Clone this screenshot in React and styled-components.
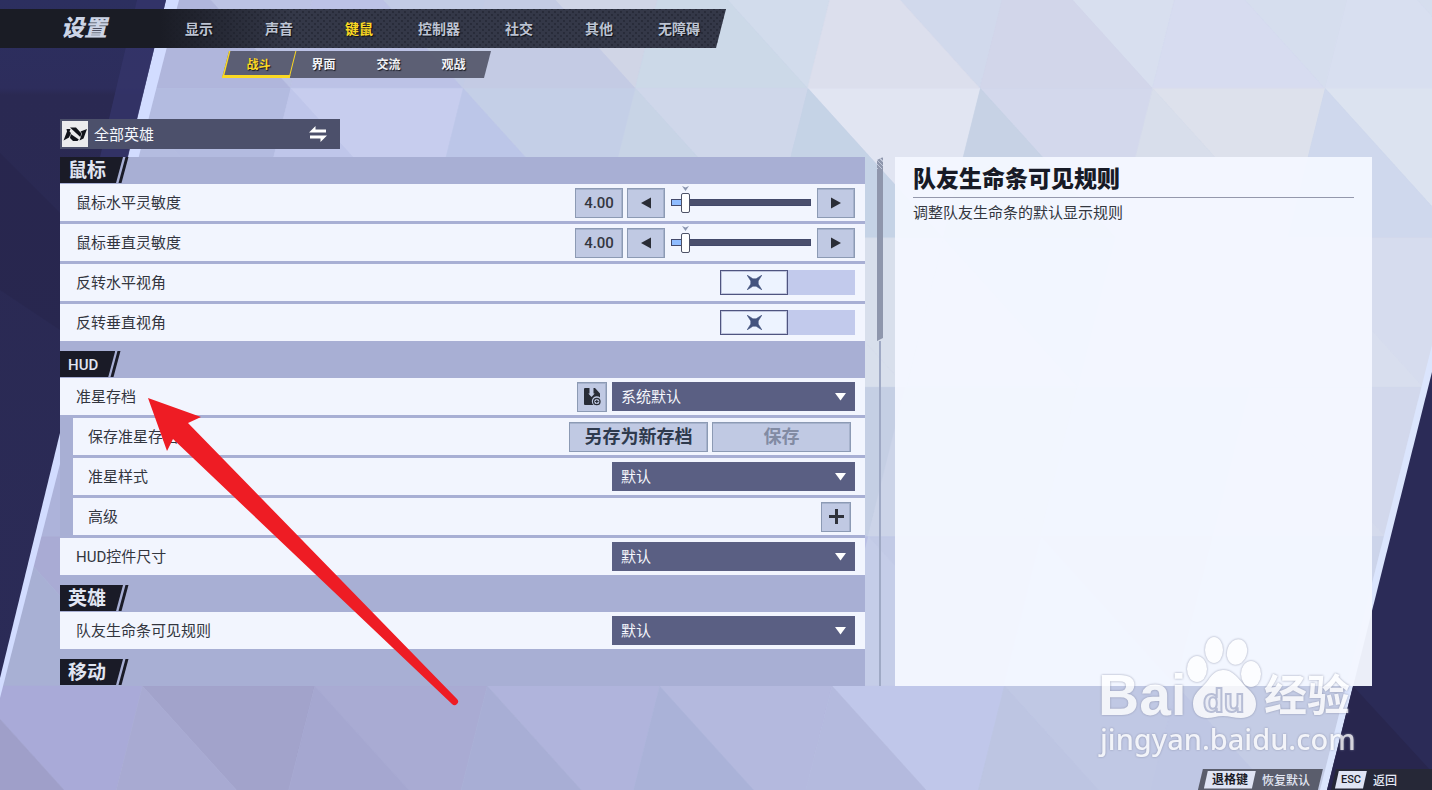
import { useState } from "react";
import styled, { createGlobalStyle } from "styled-components";

const GlobalStyle = createGlobalStyle`
    * {
        box-sizing: border-box;
    }

    body {
        margin: 0;
        background: #c4cbe6;
        font-family: Roboto, "Noto Sans CJK SC", sans-serif;
        font-size: 15px;
        color: #33363f;
    }

    button, input, select {
        font: inherit;
        color: inherit;
        margin: 0;
        padding: 0;
        border: none;
    }

    button, select {
        cursor: pointer;
    }
`;

const Page = styled.div`
    position: relative;
    display: flex;
    flex-direction: column;
    min-height: 100vh;
    overflow: hidden;
`;

const Backdrop = styled.svg`
    position: absolute;
    inset: 0;
    width: 100%;
    height: 100%;
    z-index: -1;
`;

const Header = styled.header`
    display: flex;
    flex-direction: column;
    align-items: flex-start;
    gap: 3px;
    padding-top: 9px;
`;

const NavBar = styled.nav`
    display: flex;
    align-items: center;
    height: 39px;
    padding: 0 7px 0 61px;
    background:
        linear-gradient(90deg, #1a1c25 22%, transparent 40%),
        radial-gradient(circle, rgba(14, 16, 26, 0.3) 1px, transparent 1px) 0 0 / 6px 6px,
        radial-gradient(circle, rgba(14, 16, 26, 0.3) 1px, transparent 1px) 3px 3px / 6px 6px,
        #343848;
    clip-path: polygon(0 0, 100% 0, calc(100% - 10px) 100%, 0 100%);
`;

const PageTitle = styled.h1`
    margin: 0;
    width: 98px;
    font-size: 23px;
    font-weight: 900;
    font-style: italic;
    line-height: 39px;
    color: #ccd4e6;
`;

const NavTab = styled.button`
    width: 80px;
    height: 39px;
    padding-bottom: 2px;
    background: none;
    font-size: 14px;
    font-weight: 700;
    white-space: nowrap;
    color: ${props => props.$active ? "#fbd923" : "#bcc3d2"};
    text-shadow: 1px 1px 1px #0c0e16;
`;

const SubNav = styled.nav`
    display: flex;
    height: 27px;
    margin-left: 222px;
    padding: 0 5px 0 4px;
    background: rgba(84, 87, 106, 0.92);
    clip-path: polygon(7px 0, 100% 0, calc(100% - 7px) 100%, 0 100%);
`;

const SubTab = styled.button`
    position: relative;
    width: 65px;
    padding-bottom: 2px;
    background: none;
    font-size: 12px;
    font-weight: 700;
    color: ${props => props.$active ? "#fbd923" : "#f2f3f7"};
    text-shadow: 1px 1px 1px #14161e;

    &::before {
        content: "";
        display: ${props => props.$active ? "block" : "none"};
        position: absolute;
        inset: 0 -2px 0 -2px;
        border: solid #fbd923;
        border-width: 0 1px 3px 3px;
        transform: skewX(-14deg);
    }
`;

const HeroPicker = styled.button`
    display: flex;
    align-items: center;
    gap: 6px;
    width: 280px;
    height: 30px;
    margin: 41px 60px 8px;
    padding: 0 13px 0 2px;
    background: #4c506b;
    color: #f4f6fc;
    text-align: left;

    span {
        flex: 1;
        padding-bottom: 2px;
    }
`;

const Content = styled.main`
    display: grid;
    grid-template-columns: minmax(0, 805fr) 6px minmax(0, 477fr);
    gap: 12px;
    padding: 0 60px;
`;

const SettingsList = styled.div`
    display: flex;
    flex-direction: column;
    gap: 10px;
    background: #a8afd4;
`;

const SectionHead = styled.div`
    display: flex;
    height: 27px;
`;

const SectionTitle = styled.h2`
    margin: 0;
    height: 26px;
    padding: 0 17px 0 8px;
    background: #1a1b27;
    color: #e1e5f2;
    font-size: ${props => props.$latin ? "15px" : "19px"};
    font-weight: ${props => props.$latin ? "500" : "700"};
    line-height: 28px;
    clip-path: polygon(0 0, 100% 0, calc(100% - 7px) 100%, 0 100%);
`;

const Slash = styled.i`
    width: 3px;
    height: 26px;
    margin-left: -1px;
    background: #1a1b27;
    transform: skewX(-15deg);
`;

const Rows = styled.div`
    display: flex;
    flex-direction: column;
    gap: 3px;
`;

const Row = styled.div`
    display: flex;
    align-items: center;
    justify-content: space-between;
    height: 37px;
    margin-left: ${props => props.$sub ? "13px" : "0"};
    padding: 0 ${props => props.$inset ? "14px" : "10px"} 0 ${props => props.$sub ? "15px" : "16px"};
    background: #f2f5fe;
`;

const RowLabel = styled.span`
    padding-bottom: 2px;
`;

const Controls = styled.div`
    display: flex;
    align-items: center;
    gap: ${props => props.$gap || "4px"};
`;

const BoxButton = styled.button`
    display: flex;
    align-items: center;
    justify-content: center;
    width: ${props => props.$width || "30px"};
    height: 30px;
    border: 1px solid #8c9ab4;
    box-shadow: inset -1px 1px 0 #a6b2cc;
    background: #c0c9e3;
    color: #2f3a4d;
    font-size: 18px;
    font-weight: 700;
    line-height: 26px;

    &:disabled {
        color: #828ba3;
    }
`;

const ValueInput = styled.input`
    width: 48px;
    height: 30px;
    border: 1px solid #8c9ab4;
    box-shadow: inset -1px 1px 0 #a6b2cc;
    background: #c0c9e3;
    color: #33363f;
    font-weight: 500;
    text-align: center;
`;

const SliderBox = styled.div`
    position: relative;
    display: flex;
    align-items: center;
    width: 140px;
    height: 30px;
    margin: 0 2px;
`;

const Range = styled.input`
    appearance: none;
    width: 100%;
    height: 7px;
    border: 1px solid #43496a;
    background: linear-gradient(90deg, #8fbcff var(--fill), #4c506d var(--fill));

    &::-webkit-slider-thumb {
        appearance: none;
        width: 9px;
        height: 20px;
        border: 1px solid #4d5166;
        border-radius: 2px;
        background: #ffffff;
    }
`;

const DefaultMark = styled.svg`
    position: absolute;
    left: 11px;
    top: -2px;
    width: 7px;
    height: 5px;
`;

const ToggleBox = styled.span`
    position: relative;
    display: flex;
    width: 135px;
    height: 25px;
    background: #c2caec;

    input {
        position: absolute;
        inset: 0;
        width: 100%;
        height: 100%;
        opacity: 0;
    }
`;

const Knob = styled.span`
    display: flex;
    align-items: center;
    justify-content: center;
    width: 68px;
    margin-left: ${props => props.$on ? "auto" : "0"};
    border: 1px solid #4f5480;
    box-shadow: inset 0 0 0 1px #c0c6de;
    background: #edf3ff;
`;

const SelectBox = styled.div`
    position: relative;
    width: 243px;

    svg {
        position: absolute;
        right: 9px;
        top: 11px;
        pointer-events: none;
    }
`;

const Select = styled.select`
    appearance: none;
    display: block;
    width: 100%;
    height: 29px;
    padding: 0 30px 0 9px;
    background: #5a5f83;
    color: #f4f6fc;
    border-radius: 0;
`;

const Scrollbar = styled.div`
    display: flex;
    flex-direction: column;
    align-items: center;
`;

const ScrollThumb = styled.div`
    width: 6px;
    height: 184px;
    background:
        repeating-linear-gradient(45deg, rgba(226, 231, 244, 0.6) 0 1px, transparent 1px 3px) 0 0 / 6px 12px no-repeat,
        #8e96ac;
    clip-path: polygon(0 3px, 100% 0, 100% calc(100% - 3px), 0 100%);
`;

const ScrollTrack = styled.div`
    flex: 1;
    width: 2px;
    background: #9fa9c4;
`;

const DetailPanel = styled.aside`
    padding: 5px 18px 0;
    background: rgba(244, 247, 255, 0.96);

    h3 {
        margin: 0;
        font-size: 23px;
        font-weight: 900;
        line-height: 35px;
        color: #171a26;
        border-bottom: 1px solid #9498ac;
    }

    p {
        margin: 4px 0;
        line-height: 22px;
    }
`;

const Footer = styled.footer`
    display: flex;
    justify-content: flex-end;
    gap: 8px;
    margin-top: auto;
`;

const FooterButton = styled.button`
    display: flex;
    align-items: center;
    gap: 6px;
    height: 21px;
    padding: ${props => props.$last ? "0 35px 0 4px" : "0 13px 0 6px"};
    background: ${props => props.$last ? "#262837" : "#5a5d6c"};
    color: #e4e8f4;
    font-size: 12px;
    font-weight: 500;
    clip-path: ${props => props.$last
        ? "polygon(5px 0, 100% 0, 100% 100%, 0 100%)"
        : "polygon(5px 0, 100% 0, calc(100% - 5px) 100%, 0 100%)"};
`;

const Key = styled.kbd`
    height: 18px;
    padding: 0 ${props => props.$latin ? "6px" : "8px"};
    background: #dfe4f4;
    color: #1a1b27;
    font-family: Roboto, "Noto Sans CJK SC", sans-serif;
    font-size: ${props => props.$latin ? "11px" : "12px"};
    font-weight: ${props => props.$latin ? "500" : "700"};
    line-height: 18px;
    clip-path: polygon(4px 0, 100% 0, calc(100% - 4px) 100%, 0 100%);
`;

const Pointer = styled.svg`
    position: absolute;
    left: 148px;
    top: 398px;
    width: 311px;
    height: 308px;
    pointer-events: none;
`;

const Watermark = styled.svg`
    position: absolute;
    right: 72px;
    bottom: 26px;
    width: 264px;
    height: 134px;
    pointer-events: none;
    opacity: 0.8;
    filter: drop-shadow(0 0 1px #868ba4);
`;

// facet colours per row: [down, up, down, up ...] from the left
const facets = [
    ["#b2b8dc", "#a9afd8", "#bcc3e4", "#b0b6dc", "#c2cbe5", "#bcc2e6", "#d0d5e6", "#c4cbe4", "#d2dcec", "#ccd9e8", "#d1d9ec", "#dcdfed", "#d8dfef", "#d2d6ea", "#d6deee", "#d7dcf0", "#d6deee", "#d8dff0"],
    ["#aeb4da", "#b0b8dd", "#b3bbe0", "#b4bce0", "#c7cdee", "#bfc6ea", "#c4cfe7", "#bcc6e8", "#cfd7ea", "#c8d4e6", "#e1e5f2", "#c5d3e6", "#d3d8ec", "#c7d2e5", "#dde1ec", "#d8deeb", "#dce3f0", "#cfd8ed"],
    ["#aaaed6", "#a9aed6", "#b0b5dc", "#b4bae0", "#bcc2e6", "#bcc6e6", "#c4cce8", "#c6d0e6", "#c8d2e8", "#c9d3e7", "#d8dfec", "#d8dfec", "#d0d6ea", "#d2dae9", "#d4daec", "#d6dcee", "#d6dcee", "#d8deee"],
    ["#a8a9d4", "#a4a6ce", "#a7abd3", "#adb3da", "#b4bae0", "#b4bcdf", "#bcc4e4", "#bfc8e4", "#c4cce6", "#c3cee4", "#c5cfe4", "#c4cde6", "#c9d2e8", "#ccd4e8", "#ced6ea", "#cfd7ea", "#d2d8ec", "#d4daec"],
    ["#a2a4cc", "#a6aad2", "#a9abd4", "#a8b0d4", "#b0b6dc", "#b0b6dc", "#b8bee2", "#b6bce0", "#bac0e4", "#babfe4", "#b9bfe4", "#bcc4e6", "#c2cae6", "#c5cde8", "#c8d0e8", "#cad2ea", "#ccd4ea", "#ced6ea"],
    ["#a9aad8", "#9f9fc9", "#a2a3cb", "#a8aad2", "#a9abd3", "#a5a7d0", "#b0b4dc", "#a8aed5", "#b4b9de", "#aab2d8", "#c0c7ea", "#b4bade", "#c0c8e4", "#bdc5e2", "#c4cce5", "#bfc7e4", "#c8d0e8", "#c4cce6"],
];
const rowStart = [-17, -54, -91, -129, -166, -30];

const Facets = () => facets.map((colors, row) => {
    const top = -61 + row * 149.4;
    const bottom = top + 149.4;
    return colors.map((color, i) => {
        const a = rowStart[row] + Math.floor(i / 2) * 172.4;
        const tip = `${a + 135},${bottom}`;
        const points = i % 2 === 0
            ? `${a},${top} ${a + 172.4},${top} ${tip}`
            : `${a},${top} ${a - 37.4},${bottom} ${tip}`;
        return <polygon key={row + "-" + i} points={points} fill={color} stroke={color} strokeWidth="0.5" />;
    });
});

const Background = () => (
    <Backdrop viewBox="0 0 1432 790" preserveAspectRatio="none" aria-hidden="true">
        <defs>
            <linearGradient id="night" x1="0" y1="0" x2="0" y2="1">
                <stop offset="0" stopColor="#2c2f5f" />
                <stop offset="0.13" stopColor="#2d2d5c" />
                <stop offset="0.14" stopColor="#2a2952" />
                <stop offset="1" stopColor="#2b2b57" />
            </linearGradient>
        </defs>
        <Facets />
        <polygon points="0,0 179,0 0,698" fill="#d2dcff" />
        <polygon points="0,0 166,0 0,678" fill="url(#night)" />
        <polygon points="137,0 166,0 128,157 100,157" fill="#34346a" opacity="0.8" />
        <polygon points="0,153 60,213 60,330 0,290" fill="#252448" opacity="0.4" />
        <polygon points="1432,345 1432,790 1320,790" fill="#dbe5fd" />
        <polygon points="1432,372 1432,790 1327,790" fill="#2b2b57" />
        <polygon points="1353,686 1432,772 1432,790 1327,790" fill="#28264e" />
    </Backdrop>
);

const HeroLogo = () => (
    <svg width="26" height="26" viewBox="0 0 26 26" aria-hidden="true">
        <rect width="26" height="26" fill="#ebebed" />
        <g fill="#11131a">
            <path d="M4.500 8h4L7.500 10.500 9 12l-2 4.500L1.500 19.500 5 10.500z" />
            <path d="M8 6.500h6l5.500 6-1.200 3.500z" />
            <path d="M8.800 13l8 5.500-1.300 1.500H11l-3-3z" />
            <path d="M25 8l-3.500 9.500-4 2 2.500-7-1.500-2z" />
        </g>
    </svg>
);

const SwapIcon = () => (
    <svg width="18" height="16" viewBox="0 0 18 16" fill="#ffffff" aria-hidden="true">
        <path d="M0 6.500L6.500 0v3.500H17v3H0zM18 9.500L11.500 16v-3.500H1v-3h17z" />
    </svg>
);

const Triangle = ({ left }) => (
    <svg width="10" height="12" viewBox="0 0 10 12" aria-hidden="true">
        <path d={left ? "M10 .5v11L0 6z" : "M0 .5v11L10 6z"} fill="#2a2d36" />
    </svg>
);

const SaveIcon = () => (
    <svg width="18" height="18" viewBox="0 0 18 18" aria-hidden="true">
        <path d="M2 0h4.500v5.500H5.300L8.500 9l3.200-3.500h-1.200V0H12l5 5.500V9.500a4.500 4.500 0 0 0-6.500 7.500H2a1 1 0 0 1-1-1V1a1 1 0 0 1 1-1z" fill="#282c36" />
        <circle cx="13.800" cy="13.500" r="3.200" fill="none" stroke="#282c36" strokeWidth="1.300" />
        <path d="M13.800 11.800v3.400M12.100 13.500h3.400" stroke="#282c36" strokeWidth="1.200" />
    </svg>
);

const SettingRow = ({ label, sub, inset, children }) => (
    <Row $sub={sub} $inset={inset}>
        <RowLabel>{label}</RowLabel>
        {children}
    </Row>
);

const SliderRow = ({ label }) => {
    const [value, setValue] = useState(4);
    const max = 55;
    return (
        <SettingRow label={label}>
            <Controls>
                <ValueInput
                    aria-label={label + " 数值"}
                    value={value.toFixed(2)}
                    onChange={e => setValue(Number(e.target.value) || 0)}
                />
                <BoxButton $width="38px" aria-label="减少" onClick={() => setValue(Math.max(0, value - 1))}><Triangle left /></BoxButton>
                <SliderBox>
                    <DefaultMark viewBox="0 0 7 5">
                        <path d="M0 0l3.500 1.500L7 0 3.500 5z" fill="#8b96b0" />
                    </DefaultMark>
                    <Range
                        type="range"
                        aria-label={label}
                        min="0"
                        max={max}
                        value={value}
                        onChange={e => setValue(Number(e.target.value))}
                        style={{ "--fill": `${(value / max) * 100}%` }}
                    />
                </SliderBox>
                <BoxButton $width="38px" aria-label="增加" onClick={() => setValue(Math.min(max, value + 1))}><Triangle /></BoxButton>
            </Controls>
        </SettingRow>
    );
};

const ToggleRow = ({ label }) => {
    const [on, setOn] = useState(false);
    return (
        <SettingRow label={label}>
            <ToggleBox>
                <Knob $on={on}>
                    <svg width="15" height="15" viewBox="0 0 14 14" aria-hidden="true">
                        <path d="M0 0l5.500 3.500h3L14 0l-3.500 5.500v3L14 14l-5.500-3.500h-3L0 14l3.500-5.500v-3z" fill="#45547f" stroke="#45547f" strokeWidth="0.500" />
                    </svg>
                </Knob>
                <input type="checkbox" aria-label={label} checked={on} onChange={e => setOn(e.target.checked)} />
            </ToggleBox>
        </SettingRow>
    );
};

const Dropdown = ({ label, value }) => (
    <SelectBox>
        <Select aria-label={label} defaultValue={value}>
            <option>{value}</option>
        </Select>
        <svg width="11" height="8" viewBox="0 0 11 8" aria-hidden="true">
            <path d="M0 0h11L5.500 7.500z" fill="#ffffff" />
        </svg>
    </SelectBox>
);

const Section = ({ title, latin, children }) => (
    <section>
        <SectionHead>
            <SectionTitle $latin={latin}>{title}</SectionTitle>
            <Slash />
        </SectionHead>
        <Rows>{children}</Rows>
    </section>
);

const tabs = ["显示", "声音", "键鼠", "控制器", "社交", "其他", "无障碍"];
const subTabs = ["战斗", "界面", "交流", "观战"];

const App = () => {
    const [tab, setTab] = useState("键鼠");
    const [subTab, setSubTab] = useState("战斗");

    return (
        <>
            <GlobalStyle />
            <Page>
                <Background />
                <Header>
                    <NavBar>
                        <PageTitle>设置</PageTitle>
                        {tabs.map(t => (
                            <NavTab key={t} $active={t === tab} onClick={() => setTab(t)}>{t}</NavTab>
                        ))}
                    </NavBar>
                    <SubNav>
                        {subTabs.map(t => (
                            <SubTab key={t} $active={t === subTab} onClick={() => setSubTab(t)}>{t}</SubTab>
                        ))}
                    </SubNav>
                </Header>
                <HeroPicker>
                    <HeroLogo />
                    <span>全部英雄</span>
                    <SwapIcon />
                </HeroPicker>
                <Content>
                    <SettingsList>
                        <Section title="鼠标">
                            <SliderRow label="鼠标水平灵敏度" />
                            <SliderRow label="鼠标垂直灵敏度" />
                            <ToggleRow label="反转水平视角" />
                            <ToggleRow label="反转垂直视角" />
                        </Section>
                        <Section title="HUD" latin>
                            <SettingRow label="准星存档">
                                <Controls $gap="5px">
                                    <BoxButton aria-label="导入存档"><SaveIcon /></BoxButton>
                                    <Dropdown label="准星存档" value="系统默认" />
                                </Controls>
                            </SettingRow>
                            <SettingRow label="保存准星存档" sub inset>
                                <Controls>
                                    <BoxButton $width="139px">另存为新存档</BoxButton>
                                    <BoxButton $width="139px" disabled>保存</BoxButton>
                                </Controls>
                            </SettingRow>
                            <SettingRow label="准星样式" sub>
                                <Dropdown label="准星样式" value="默认" />
                            </SettingRow>
                            <SettingRow label="高级" sub inset>
                                <BoxButton aria-label="展开高级">
                                    <svg width="15" height="15" viewBox="0 0 15 15" aria-hidden="true">
                                        <path d="M7.500 0v15M0 7.500h15" stroke="#2f323b" strokeWidth="3" />
                                    </svg>
                                </BoxButton>
                            </SettingRow>
                            <SettingRow label="HUD控件尺寸">
                                <Dropdown label="HUD控件尺寸" value="默认" />
                            </SettingRow>
                        </Section>
                        <Section title="英雄">
                            <SettingRow label="队友生命条可见规则">
                                <Dropdown label="队友生命条可见规则" value="默认" />
                            </SettingRow>
                        </Section>
                        <Section title="移动" />
                    </SettingsList>
                    <Scrollbar>
                        <ScrollThumb />
                        <ScrollTrack />
                    </Scrollbar>
                    <DetailPanel>
                        <h3>队友生命条可见规则</h3>
                        <p>调整队友生命条的默认显示规则</p>
                    </DetailPanel>
                </Content>
                <Footer>
                    <FooterButton><Key>退格键</Key>恢复默认</FooterButton>
                    <FooterButton $last><Key $latin>ESC</Key>返回</FooterButton>
                </Footer>
                <Pointer viewBox="0 0 311 308" aria-hidden="true">
                    <path d="M0 0l53 19-13 6 269 276a3.500 3.500 0 0 1-5 5L25 41l-6 12z" fill="#ee1c24" />
                </Pointer>
                <Watermark viewBox="0 0 264 134" fill="#ffffff">
                    <text x="2" y="85" fontFamily="Liberation Sans, sans-serif" fontWeight="700" fontSize="57">Bai</text>
                    <ellipse cx="101" cy="39" rx="10" ry="13" />
                    <ellipse cx="118" cy="20" rx="9" ry="13" />
                    <ellipse cx="141" cy="22" rx="10" ry="13" transform="rotate(15 141 22)" />
                    <ellipse cx="155" cy="44" rx="10" ry="13" />
                    <path d="M127 40c-10 0-13 9-19 15-6 6-11 10-11 19 0 9 6 14 14 14 6 0 10-2 16-2s11 2 18 2c9 0 15-5 15-14 0-9-6-13-12-19-6-7-11-15-21-15z" />
                    <text x="107" y="82" fontFamily="Liberation Sans, sans-serif" fontWeight="700" fontSize="34" fill="#f4f5fa" stroke="#b4bad2" strokeWidth="2">du</text>
                    <text x="168" y="81" fontFamily="Noto Sans CJK SC, sans-serif" fontWeight="700" fontSize="43">经验</text>
                    <text x="4" y="120" fontFamily="Noto Sans, sans-serif" fontWeight="500" fontSize="29">jingyan.baidu.com</text>
                </Watermark>
            </Page>
        </>
    );
};

export default App;
